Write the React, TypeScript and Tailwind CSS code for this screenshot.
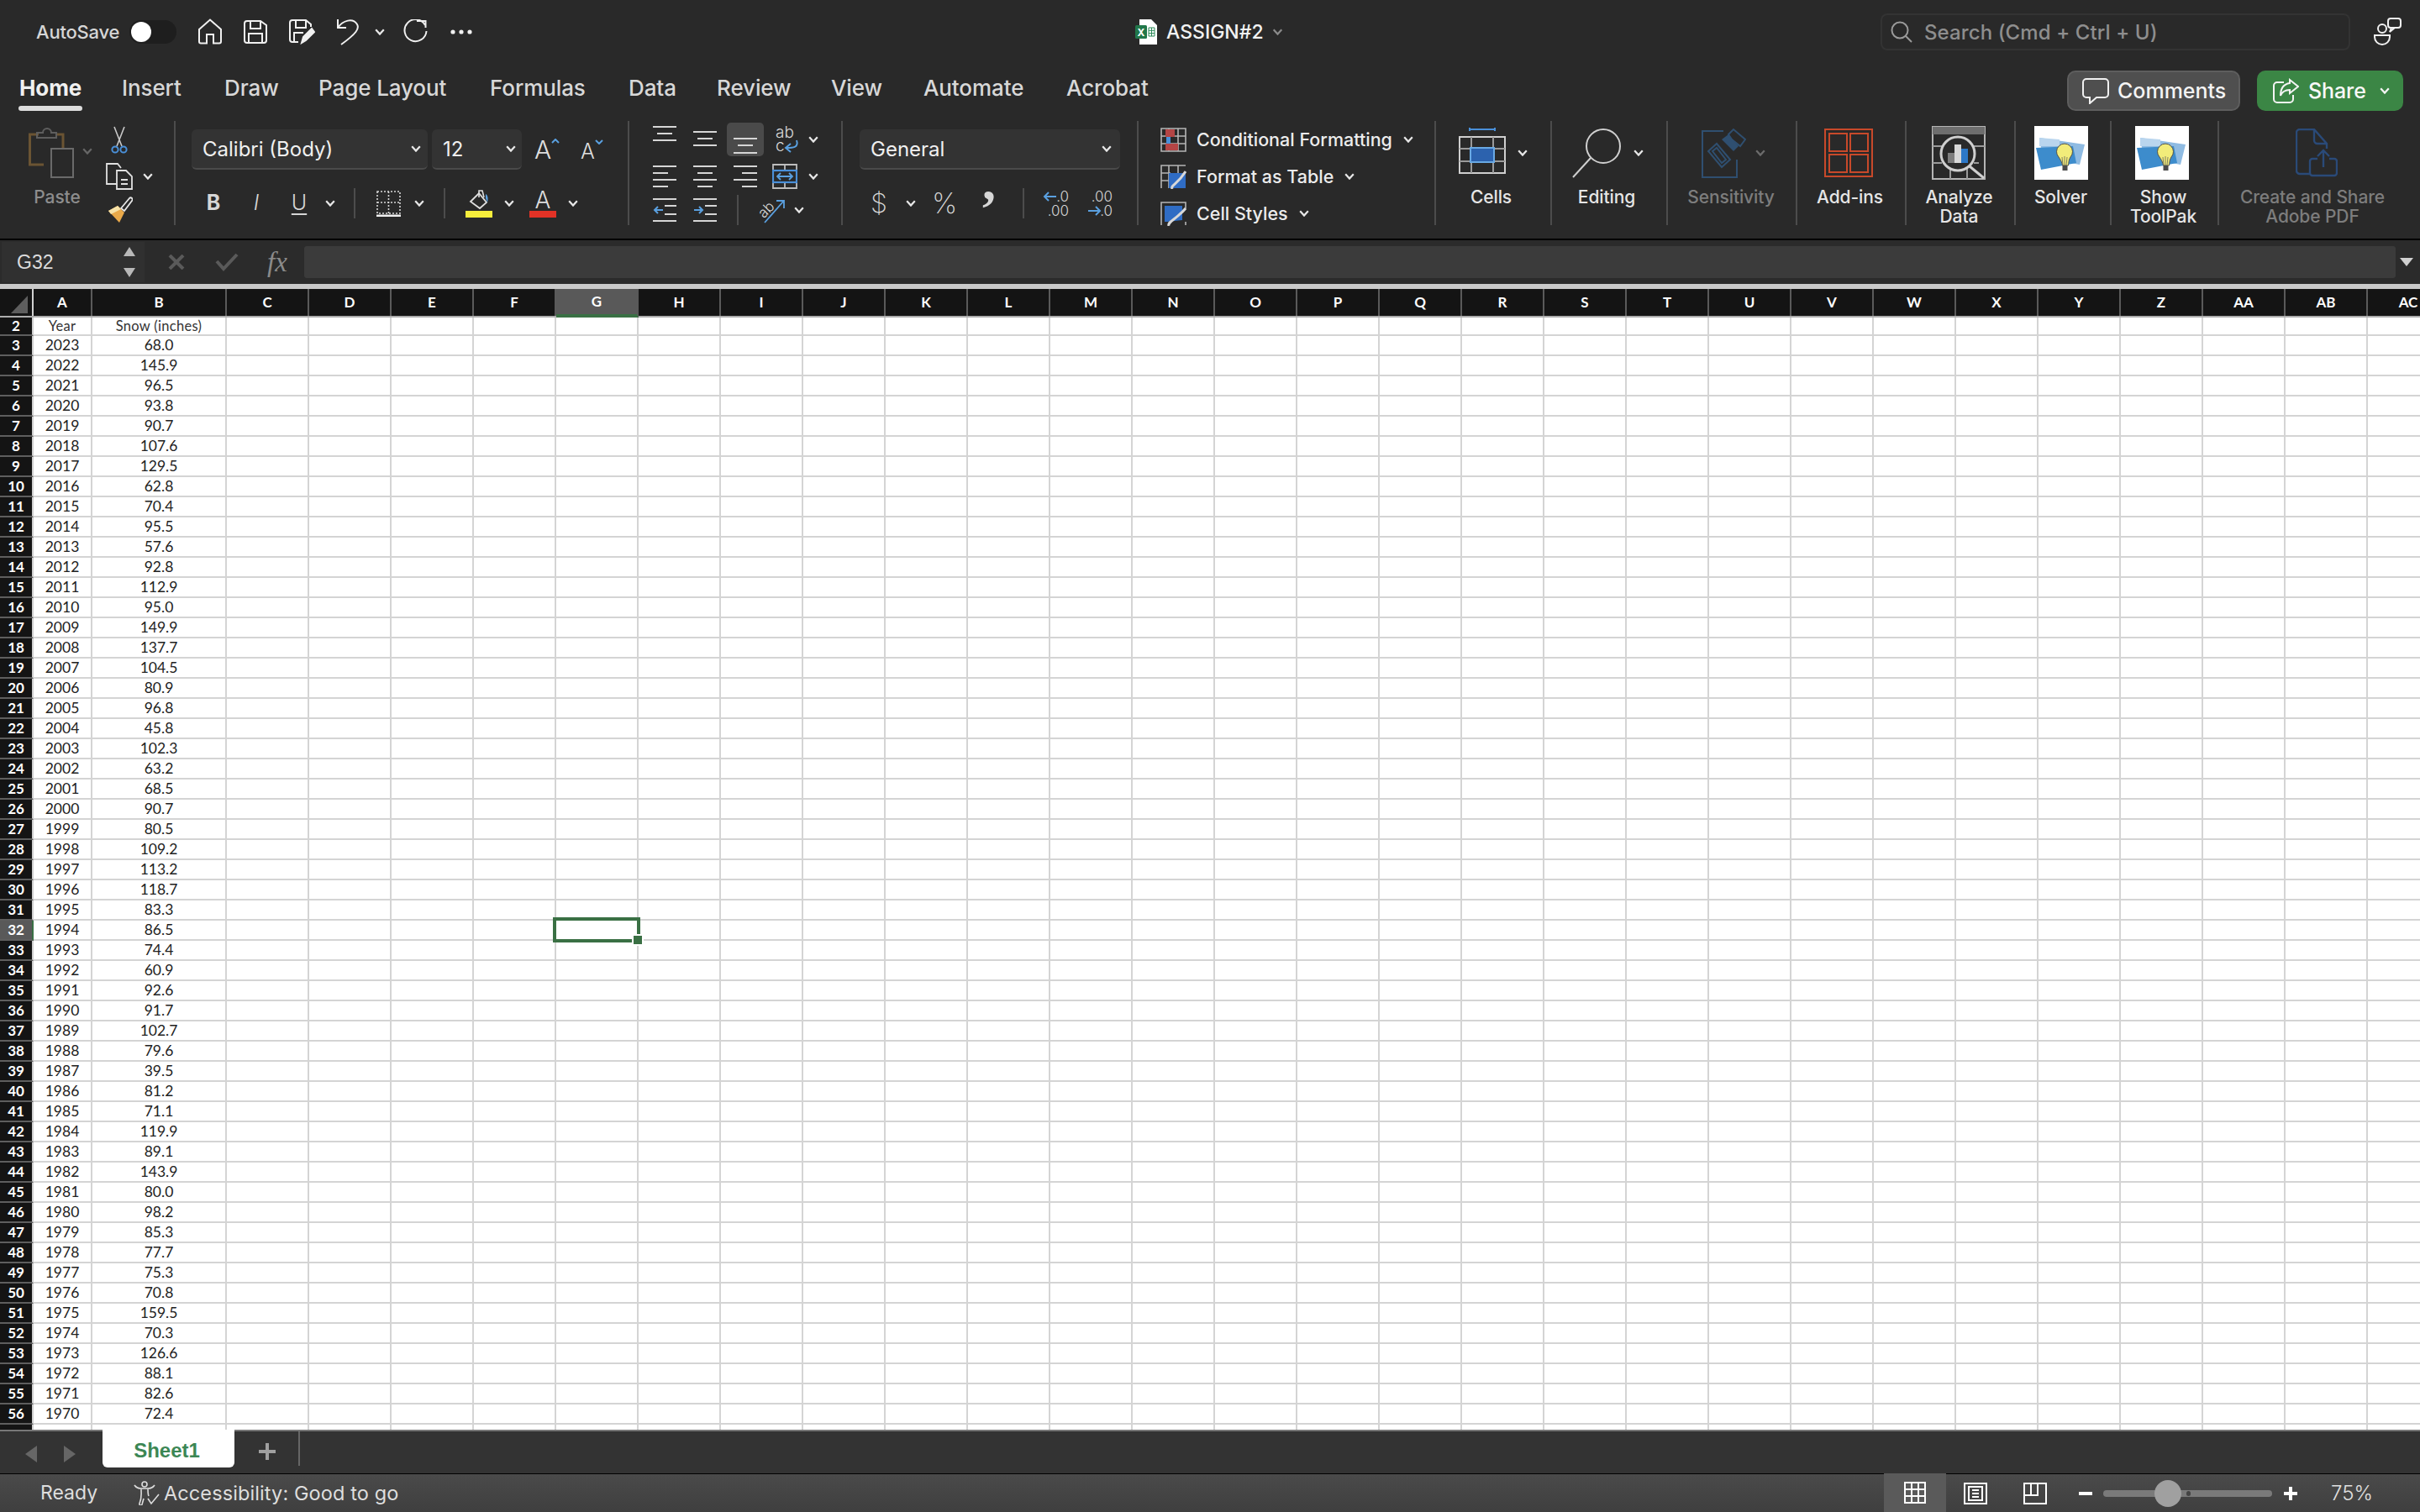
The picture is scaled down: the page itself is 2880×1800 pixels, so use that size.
import React from 'react';

const TABS: [string, string][] = [
    ['Home', 'w-[122px]'],
    ['Insert', 'w-[122px]'],
    ['Draw', 'w-[112px]'],
    ['Page Layout', 'w-[204px]'],
    ['Formulas', 'w-[165px]'],
    ['Data', 'w-[105px]'],
    ['Review', 'w-[136px]'],
    ['View', 'w-[110px]'],
    ['Automate', 'w-[170px]'],
    ['Acrobat', 'w-[100px]'],
];

const COLS = 'CDEFGHIJKLMNOPQRSTUVWXYZ'.split('').concat(['AA', 'AB', 'AC']);

const SNOW = [
    '68.0', '145.9', '96.5', '93.8', '90.7', '107.6', '129.5', '62.8', '70.4', '95.5', '57.6', '92.8', '112.9', '95.0',
    '149.9', '137.7', '104.5', '80.9', '96.8', '45.8', '102.3', '63.2', '68.5', '90.7', '80.5', '109.2', '113.2', '118.7',
    '83.3', '86.5', '74.4', '60.9', '92.6', '91.7', '102.7', '79.6', '39.5', '81.2', '71.1', '119.9', '89.1', '143.9',
    '80.0', '98.2', '85.3', '77.7', '75.3', '70.8', '159.5', '70.3', '126.6', '88.1', '82.6', '72.4',
];

const Chev = ({ className = '', color = '#e8e8e8' }: { className?: string; color?: string }) => (
    <svg width="12" height="8" viewBox="0 0 12 8" fill="none" className={`shrink-0 ${className}`}>
        <path d="M1.2 1.2 L6 6.6 L10.8 1.2" stroke={color} strokeWidth="2.2" />
    </svg>
);

const Sep = ({ className = '' }: { className?: string }) => <div className={`w-[2px] h-[36px] bg-[#4c4c4c] shrink-0 ${className}`} />;

// three stacked text lines, y positions change per alignment
const Lines = ({ ys, xs }: { ys: number[]; xs: [number, number][] }) => (
    <svg width="28" height="40" viewBox="0 0 28 40" className="shrink-0">
        {ys.map((y, i) => (
            <rect key={i} x={xs[i][0]} y={y} width={xs[i][1]} height="2" fill="#d6d6d6" />
        ))}
    </svg>
);

const BulbIcon = () => (
    <svg width="64" height="64" viewBox="0 0 64 64" className="shrink-0">
        <rect width="64" height="64" fill="#ffffff" />
        <path d="M6 14 L60 22 L54 46 L10 38 Z" fill="#8fbbe2" />
        <path d="M2 26 L46 24 L50 44 L8 52 Z" fill="#3d8ccc" />
        <path d="M6 14 L30 16 L30 24 L6 24 Z" fill="#b9d5ee" />
        <g transform="translate(-3 9)">
            <path d="M32 28 a9.5 9.5 0 1 1 14 0 c-2 3 -2 6 -2.5 10 h-7 c-0.5 -4 -2.5 -7 -4.5 -10 Z" fill="#f2ec7a" stroke="#55544a" strokeWidth="1" />
            <path d="M37 38 L36 28 M39 38 V27 M41 38 L42 28" stroke="#66655a" strokeWidth="0.8" />
            <rect x="36.5" y="38" width="6" height="6" fill="#4a4a4a" />
        </g>
    </svg>
);

const Group = ({ className = '', last = false, children }: { className?: string; last?: boolean; children: React.ReactNode }) => (
    <div className={`h-[124px] shrink-0 ${last ? '' : 'border-r-2 border-[#4c4c4c]'} ${className}`}>{children}</div>
);

const Label = ({ className = '', children }: { className?: string; children: React.ReactNode }) => (
    <div className={`mt-[4px] text-center text-[21px] leading-[23px] font-medium tracking-[-0.1px] text-[#e6e6e6] ${className}`}>{children}</div>
);

const TopBar = () => (
    <div className="h-[75px] flex items-center shrink-0">
        <span className="ml-[43px] w-[99px] pt-[2px] text-[22px] font-medium tracking-[-0.2px] text-[#d6d6d6] whitespace-nowrap">AutoSave</span>
        <div className="ml-[12px] w-[56px] h-[28px] rounded-full bg-[#1e1e1e] flex items-center pl-[2px]">
            <div className="w-[24px] h-[24px] rounded-full bg-white" />
        </div>
        {/* home */}
        <svg width="30" height="31" viewBox="0 0 30 31" fill="none" stroke="#f0f0f0" strokeWidth="2" className="ml-[25px]">
            <path d="M2 13 L15 1.5 L28 13 V27.5 a2 2 0 0 1 -2 2 H19 V19 H11 V29.5 H4 a2 2 0 0 1 -2 -2 Z" />
        </svg>
        {/* save */}
        <svg width="28" height="28" viewBox="0 0 28 28" fill="none" stroke="#f0f0f0" strokeWidth="2" className="ml-[25px]">
            <path d="M4 1 H20 L27 6 V24 a3 3 0 0 1 -3 3 H4 a3 3 0 0 1 -3 -3 V4 a3 3 0 0 1 3 -3 Z" />
            <path d="M8 1 V10 H20 V1 M6 27 V16 H22 V27" />
        </svg>
        {/* save as */}
        <svg width="31" height="30" viewBox="0 0 31 30" fill="none" stroke="#f0f0f0" strokeWidth="2" className="ml-[26px]">
            <path d="M26 9 V6 L20 1 H4 a3 3 0 0 0 -3 3 V24 a3 3 0 0 0 3 3 H11" />
            <path d="M8 1 V10 H20 V1 M6 27 V16 H17" />
            <path d="M15 28 L17 21 L27 11 L30 15 L20 25 Z" fill="#f0f0f0" />
        </svg>
        {/* undo */}
        <svg width="28" height="32" viewBox="0 0 28 32" fill="none" stroke="#f0f0f0" strokeWidth="2" className="ml-[25px]">
            <path d="M2 1 V11 H12" />
            <path d="M2 11 C8 2 20 -1 25 7 C28 12 24 18 6 31" />
        </svg>
        <Chev className="ml-[18px]" />
        {/* redo */}
        <svg width="30" height="30" viewBox="0 0 30 30" fill="none" stroke="#f0f0f0" strokeWidth="2" className="ml-[21px]">
            <path d="M27 7 A13 13 0 1 0 28.5 14" />
            <path d="M17 2 H27.5 V10" />
        </svg>
        <svg width="26" height="6" viewBox="0 0 26 6" fill="#f0f0f0" className="ml-[27px]">
            <circle cx="3" cy="3" r="2.6" />
            <circle cx="13" cy="3" r="2.6" />
            <circle cx="23" cy="3" r="2.6" />
        </svg>
        {/* excel file */}
        <svg width="26" height="30" viewBox="0 0 26 30" className="ml-[789px] overflow-visible">
            <path d="M5 0 H19 L26 7 V30 H5 Z" fill="#ffffff" />
            <rect x="0" y="7" width="14" height="16" rx="1.5" fill="#21774a" />
            <text x="7" y="19.5" textAnchor="middle" fontSize="12" fontWeight="700" fill="#ffffff" fontFamily="Inter, sans-serif">X</text>
            <path d="M16 10 H23 V20 H16 Z M16 13.3 H23 M16 16.6 H23 M19.5 10 V20" stroke="#2c8a59" strokeWidth="1" fill="none" />
        </svg>
        <span className="ml-[11px] w-[118px] pt-[2px] text-[23px] font-medium text-[#f2f2f2] whitespace-nowrap">ASSIGN#2</span>
        <Chev className="ml-[6px] !w-[17px]" color="#8a8a8a" />
        {/* search */}
        <div className="ml-[709px] w-[559px] h-[44px] rounded-[8px] border-2 border-[#333333] flex items-center pl-[10px]">
            <svg width="26" height="26" viewBox="0 0 26 26" fill="none" stroke="#9a9a9a" strokeWidth="2">
                <circle cx="11" cy="11" r="9.5" />
                <path d="M18 18 L25 25" />
            </svg>
            <span className="ml-[14px] pt-[2px] text-[24px] font-medium tracking-[0.1px] text-[#8e8e8e] whitespace-nowrap">Search (Cmd + Ctrl + U)</span>
        </div>
        {/* people */}
        <svg width="33" height="33" viewBox="0 0 33 33" fill="none" stroke="#f0f0f0" strokeWidth="2" className="ml-[28px]">
            <rect x="17" y="1" width="15" height="11" rx="3" />
            <path d="M21 12 L19 17 L25 12" />
            <circle cx="10" cy="13" r="5" />
            <path d="M1 21 H19 V23 a9 9 0 0 1 -18 0 Z" />
        </svg>
    </div>
);

const TabRow = () => (
    <div className="h-[69px] shrink-0 flex items-start pl-[23px]">
        {TABS.map(([t, w], i) => (
            <div key={t} className={`${w} pt-[15px]`}>
                <div className={`inline-block text-[26px] leading-[30px] tracking-[-0.1px] whitespace-nowrap ${i === 0 ? 'font-bold text-[#f0f0f0]' : 'font-medium text-[#d8d8d8]'}`}>{t}</div>
                {i === 0 && <div className="mt-[6px] h-[6px] -ml-[1px] w-[76px] rounded-full bg-[#dcdcdc]" />}
            </div>
        ))}
        <div className="ml-auto flex mt-[9px] pr-[20px]">
            <div className="w-[206px] h-[48px] rounded-[10px] bg-[#4f4f4f] border-2 border-[#5e5e5e] flex items-center pl-[16px]">
                <svg width="32" height="31" viewBox="0 0 32 31" fill="none" stroke="#f0f0f0" strokeWidth="2">
                    <path d="M5 1 H27 a4 4 0 0 1 4 4 V19 a4 4 0 0 1 -4 4 H17 L9 30 V23 H5 a4 4 0 0 1 -4 -4 V5 a4 4 0 0 1 4 -4 Z" />
                </svg>
                <span className="ml-[10px] pt-[2px] text-[25px] font-medium text-[#f4f4f4]">Comments</span>
            </div>
            <div className="ml-[20px] w-[174px] h-[48px] rounded-[10px] bg-[#3b8645] flex items-center pl-[19px]">
                <svg width="31" height="30" viewBox="0 0 31 30" fill="none" stroke="#f4f4f4" strokeWidth="2">
                    <path d="M13 5 H5 a4 4 0 0 0 -4 4 V25 a4 4 0 0 0 4 4 H20 a4 4 0 0 0 4 -4 V20" />
                    <path d="M20 2 L30 10 L20 18 V14 C14 14 11 16 9 21 C9 12 13 7 20 6 Z" />
                </svg>
                <span className="ml-[11px] pt-[2px] text-[25px] font-medium tracking-[-0.1px] text-[#f8f8f8]">Share</span>
                <Chev className="ml-[14px] !w-[16px]" color="#f4f4f4" />
            </div>
        </div>
    </div>
);

const ClipboardGroup = () => (
    <Group className="w-[209px] flex">
        <div className="w-[126px] shrink-0">
            <div className="flex h-[76px] items-center pl-[34px]">
                <svg width="54" height="60" viewBox="0 0 54 60" fill="none">
                    <path d="M18 44 H1.5 V8 H12 M32 8 H41 V24" stroke="#6b5433" strokeWidth="3" />
                    <path d="M10 10 V6 H17 a5 5 0 0 1 10 0 H33 V12 H10 Z" stroke="#5e5e5e" strokeWidth="2" />
                    <rect x="27" y="25" width="26" height="34" stroke="#6a6a6a" strokeWidth="2" />
                </svg>
                <Chev className="ml-[10px] -mt-[4px]" color="#666666" />
            </div>
            <Label className="!text-[#8d8d8d] pl-[10px] !mt-[3px] w-[126px]">Paste</Label>
        </div>
        <div className="flex flex-col">
            <div className="h-[44px] shrink-0 flex items-center pl-[6px]">
                <svg width="20" height="33" viewBox="0 0 20 33" fill="none">
                    <path d="M4 1 L13 24 M16 1 L7 24" stroke="#c9c9c9" strokeWidth="1.6" />
                    <circle cx="5" cy="28" r="3.6" stroke="#4a90d9" strokeWidth="2" />
                    <circle cx="15" cy="28" r="3.6" stroke="#4a90d9" strokeWidth="2" />
                </svg>
            </div>
            <div className="h-[44px] shrink-0 flex items-center">
                <svg width="32" height="32" viewBox="0 0 32 32" fill="none" stroke="#e0e0e0" strokeWidth="1.8">
                    <path d="M13 25 H1 V1 H14 L18 6" />
                    <path d="M13 9 H24 L31 16 V31 H13 Z" />
                    <path d="M18 20 H26 M18 25 H26" />
                </svg>
                <Chev className="ml-[12px]" />
            </div>
            <div className="h-[36px] shrink-0 flex items-center">
                <svg width="32" height="32" viewBox="0 0 32 32" fill="none">
                    <path d="M18 14 L28 2 a2 2 0 0 1 3 3 L22 17 Z" stroke="#e8e8e8" strokeWidth="1.8" />
                    <path d="M3 17 L14 11 L22 19 L16 31 Z" fill="#e9a94a" />
                    <path d="M3 17 L14 11 L18 15 L6 21 Z" fill="#f7e2a8" />
                </svg>
            </div>
        </div>
    </Group>
);

const FontGroup = () => (
    <Group className="w-[540px] ml-0 pl-[19px]">
        <div className="flex items-center mt-[10px] h-[48px]">
            <div className="w-[281px] h-[48px] rounded-[6px] bg-[#333333] border-b-2 border-[#4a4a4a] flex items-center justify-between pl-[13px] pr-[8px]">
                <span className="text-[24px] pt-[1px] text-[#f0f0f0]">Calibri (Body)</span>
                <Chev />
            </div>
            <div className="ml-[5px] w-[107px] h-[48px] rounded-[6px] bg-[#333333] border-b-2 border-[#4a4a4a] flex items-center justify-between pl-[13px] pr-[7px]">
                <span className="text-[24px] pt-[1px] text-[#f0f0f0]">12</span>
                <Chev />
            </div>
            <div className="ml-[15px] flex items-start w-[30px]">
                <span className="text-[30px] leading-[30px] font-light text-[#dedede]">A</span>
                <svg width="10" height="6" viewBox="0 0 10 6" fill="none" className="shrink-0 mt-[2px]"><path d="M1 5 L5 1 L9 5" stroke="#5aa0e0" strokeWidth="2" /></svg>
            </div>
            <div className="ml-[25px] flex items-start w-[28px] pt-[3px]">
                <span className="text-[25px] leading-[28px] font-light text-[#dedede]">A</span>
                <svg width="10" height="6" viewBox="0 0 10 6" fill="none" className="shrink-0"><path d="M1 1 L5 5 L9 1" stroke="#5aa0e0" strokeWidth="2" /></svg>
            </div>
        </div>
        <div className="flex items-center mt-[20px] h-[40px]">
            <span className="ml-[11px] w-[30px] text-center text-[25px] font-bold text-[#d6d6d6]">B</span>
            <span className="ml-[21px] w-[30px] text-center text-[25px] italic font-light text-[#d6d6d6]">I</span>
            <span className="ml-[21px] w-[30px] text-center text-[25px] font-light underline underline-offset-4 decoration-2 text-[#d6d6d6]">U</span>
            <Chev className="ml-[16px]" />
            <Sep className="ml-[22px]" />
            <svg width="29" height="31" viewBox="0 0 29 31" fill="none" className="ml-[25px]">
                <rect x="1" y="1" width="27" height="26" stroke="#d8d8d8" strokeWidth="1.6" strokeDasharray="2 2" />
                <path d="M14.5 1 V27 M1 14 H28" stroke="#d8d8d8" strokeWidth="1.6" strokeDasharray="2 2" />
                <rect x="0" y="28.5" width="29" height="2.5" fill="#f0f0f0" />
            </svg>
            <Chev className="ml-[16px]" />
            <Sep className="ml-[23px]" />
            <svg width="32" height="33" viewBox="0 0 32 33" fill="none" className="ml-[24px]">
                <path d="M6 14 L16 4 L25 15 L17 22 Z" stroke="#e0e0e0" strokeWidth="1.8" />
                <path d="M16 9 V1 H20 L22 9" stroke="#e0e0e0" strokeWidth="1.6" />
                <path d="M24 5 C27 7 27 11 26 15 L24 10 Z" fill="#5aa0e0" />
                <rect y="25" width="32" height="8" fill="#f7ee3c" />
            </svg>
            <Chev className="ml-[14px]" />
            <div className="ml-[18px] w-[32px] h-[33px] flex flex-col items-center">
                <span className="h-[25px] text-[28px] leading-[24px] font-light text-[#dedede]">A</span>
                <div className="w-[32px] h-[8px] bg-[#e23226]" />
            </div>
            <Chev className="ml-[14px]" />
        </div>
    </Group>
);

const AlignGroup = () => (
    <Group className="w-[254px] pl-[28px] flex flex-col">
        <div className="h-[44px] shrink-0 flex items-center">
            <Lines ys={[4, 12, 20]} xs={[[0, 28], [5, 18], [0, 28]]} />
            <div className="ml-[20px]"><Lines ys={[10, 18, 26]} xs={[[0, 28], [5, 18], [0, 28]]} /></div>
            <div className="ml-[12px] w-[44px] h-[40px] rounded-[5px] bg-[#4a4a4a] flex items-center justify-center">
                <Lines ys={[18, 26, 35]} xs={[[0, 28], [5, 18], [0, 28]]} />
            </div>
            <svg width="28" height="32" viewBox="0 0 28 32" className="ml-[14px] shrink-0 overflow-visible">
                <text fontSize="19" fontWeight="300" fill="#d8d8d8" fontFamily="Inter, sans-serif">
                    <tspan x="0" y="14">ab</tspan>
                    <tspan x="0" y="30">c</tspan>
                </text>
                <path d="M25 17 C28 26 20 26 13 26 M18 21 L12 26 L18 31" stroke="#5aa0e0" strokeWidth="2" fill="none" />
            </svg>
            <Chev className="ml-[11px]" />
        </div>
        <div className="h-[44px] shrink-0 flex items-center">
            <Lines ys={[7, 15, 23, 31]} xs={[[0, 28], [0, 18], [0, 28], [0, 18]]} />
            <div className="ml-[20px]"><Lines ys={[7, 15, 23, 31]} xs={[[0, 28], [5, 18], [0, 28], [5, 18]]} /></div>
            <div className="ml-[20px]"><Lines ys={[7, 15, 23, 31]} xs={[[0, 28], [10, 18], [0, 28], [10, 18]]} /></div>
            <svg width="30" height="30" viewBox="0 0 30 30" fill="none" className="ml-[18px] shrink-0">
                <path d="M1 1 H29 V29 H1 Z M15 1 V8 M15 22 V29" stroke="#bdbdbd" strokeWidth="1.8" />
                <rect x="1" y="8" width="28" height="14" stroke="#4a90d9" strokeWidth="2.2" />
                <path d="M6 15 H24 M10 11 L6 15 L10 19 M20 11 L24 15 L20 19" stroke="#5aa0e0" strokeWidth="1.8" />
            </svg>
            <Chev className="ml-[13px]" />
        </div>
        <div className="h-[36px] shrink-0 flex items-center">
            <svg width="28" height="28" viewBox="0 0 28 28" fill="none" className="shrink-0">
                <path d="M0 1 H28 M14 9 H28 M14 19 H28 M0 27 H28" stroke="#d6d6d6" strokeWidth="2" />
                <path d="M12 14 H2 M6 10 L2 14 L6 18" stroke="#5aa0e0" strokeWidth="2" />
            </svg>
            <svg width="28" height="28" viewBox="0 0 28 28" fill="none" className="ml-[20px] shrink-0">
                <path d="M0 1 H28 M14 9 H28 M14 19 H28 M0 27 H28" stroke="#d6d6d6" strokeWidth="2" />
                <path d="M1 14 H11 M7 10 L11 14 L7 18" stroke="#5aa0e0" strokeWidth="2" />
            </svg>
            <Sep className="ml-[24px]" />
            <svg width="34" height="32" viewBox="0 0 34 32" fill="none" className="ml-[21px] shrink-0 overflow-visible">
                <text x="2" y="22" fontSize="17" fontWeight="300" fill="#d8d8d8" fontFamily="Inter, sans-serif" transform="rotate(-45 11 16)">ab</text>
                <path d="M10 31 L32 6 M24 5 H33 V14" stroke="#5aa0e0" strokeWidth="1.8" />
            </svg>
            <Chev className="ml-[11px]" />
        </div>
    </Group>
);

const DecimalIcon = ({ up }: { up: boolean }) => (
    <svg width="30" height="32" viewBox="0 0 30 32" className="shrink-0 overflow-visible">
        <text textAnchor="end" fontSize="17" fontWeight="300" fill="#d6d6d6" fontFamily="Inter, sans-serif">
            <tspan x="30" y="14">{up ? '.0' : '.00'}</tspan>
            <tspan x="30" y="31">{up ? '.00' : '.0'}</tspan>
        </text>
        {up ? (
            <path d="M15 8 H1 M6 3 L1 8 L6 13" stroke="#5aa0e0" strokeWidth="2" fill="none" />
        ) : (
            <path d="M1 25 H15 M10 20 L15 25 L10 30" stroke="#5aa0e0" strokeWidth="2" fill="none" />
        )}
    </svg>
);

const NumberGroup = () => (
    <Group className="w-[352px] pl-[20px]">
        <div className="mt-[10px] w-[310px] h-[48px] rounded-[6px] bg-[#333333] border-b-2 border-[#4a4a4a] flex items-center justify-between pl-[13px] pr-[10px]">
            <span className="text-[24px] pt-[1px] text-[#f0f0f0]">General</span>
            <Chev />
        </div>
        <div className="flex items-center mt-[20px] h-[40px]">
            <span className="ml-[13px] w-[20px] h-[40px] text-center text-[32px] leading-[40px] font-extralight text-[#d6d6d6]">$</span>
            <Chev className="ml-[22px]" />
            <span className="ml-[19px] w-[30px] text-center text-[34px] font-extralight leading-none text-[#d6d6d6]">%</span>
            <span className="ml-[27px] w-[22px] h-[24px] text-center text-[64px] font-bold leading-[0px] -translate-y-[14px] font-['Liberation_Serif',serif] text-[#d6d6d6]">,</span>
            <Sep className="ml-[29px]" />
            <div className="ml-[23px]"><DecimalIcon up /></div>
            <div className="ml-[22px]"><DecimalIcon up={false} /></div>
        </div>
    </Group>
);

const StyleRow = ({ icon, label, gap }: { icon: React.ReactNode; label: string; gap: string }) => (
    <div className="h-[44px] shrink-0 flex items-center">
        {icon}
        <span className="ml-[12px] text-[21.5px] font-medium text-[#ececec] whitespace-nowrap">{label}</span>
        <Chev className={gap} />
    </div>
);

const StylesGroup = () => (
    <Group className="w-[354px] pl-[26px] flex flex-col">
        <StyleRow
            gap="ml-[13px]"
            label="Conditional Formatting"
            icon={
                <svg width="31" height="29" viewBox="0 0 31 29" fill="none" className="shrink-0">
                    <path d="M1 1 H30 V28 H1 Z M1 10 H30 M1 19 H30 M10 1 V28 M21 1 V28" stroke="#b5b5b5" strokeWidth="1.6" />
                    <rect x="6" y="2" width="11" height="9" fill="#b44545" />
                    <rect x="7" y="11" width="5" height="8" fill="#4a90d9" />
                    <rect x="6" y="19" width="15" height="8" fill="#b44545" />
                </svg>
            }
        />
        <StyleRow
            gap="ml-[13px]"
            label="Format as Table"
            icon={
                <svg width="31" height="29" viewBox="0 0 31 29" fill="none" className="shrink-0">
                    <path d="M1 28 V1 H30 M1 10 H12 M1 19 H10 M10 1 V28 M21 1 V10" stroke="#b5b5b5" strokeWidth="1.6" />
                    <path d="M10 10 H30 V28 H10 Z" fill="#2f6cc4" />
                    <path d="M14 29 C12 24 20 24 30 8" stroke="#d8d8d8" strokeWidth="3" />
                </svg>
            }
        />
        <div className="h-[36px] shrink-0">
            <StyleRow
                gap="ml-[13px]"
                label="Cell Styles"
                icon={
                    <svg width="31" height="29" viewBox="0 0 31 29" fill="none" className="shrink-0">
                        <path d="M1 28 V1 H30 V8 M30 24 V28" stroke="#b5b5b5" strokeWidth="1.6" />
                        <path d="M5 5 H26 V22 L8 24 H5 Z" fill="#2f6cc4" />
                        <path d="M10 29 C8 24 18 22 30 8" stroke="#d8d8d8" strokeWidth="3" />
                    </svg>
                }
            />
        </div>
    </Group>
);

const LargeGroups = () => (
    <>
        <Group className="w-[138px]">
            <div className="flex items-center h-[76px] pl-[27px]">
                <svg width="56" height="64" viewBox="0 0 56 64" fill="none" className="shrink-0">
                    <path d="M13 2 V6 M13 4 H43 M43 2 V6" stroke="#4a90d9" strokeWidth="2" />
                    <rect x="1" y="13" width="54" height="43" stroke="#cfcfcf" strokeWidth="2" />
                    <path d="M15 13 V56 M41 13 V56 M1 27 H55 M1 42 H55" stroke="#9a9a9a" strokeWidth="2" />
                    <rect x="14" y="26" width="28" height="17" fill="#2c62ae" stroke="#69a9e4" strokeWidth="2" />
                </svg>
                <Chev className="ml-[14px]" />
            </div>
            <Label className="pr-[5px] !mt-[3px]">Cells</Label>
        </Group>
        <Group className="w-[138px]">
            <div className="flex items-center h-[76px] pl-[24px]">
                <svg width="58" height="60" viewBox="0 0 58 60" fill="none" className="shrink-0">
                    <ellipse cx="37" cy="22" rx="20" ry="20" stroke="#cfcfcf" strokeWidth="2" />
                    <path d="M22 36 L1 59" stroke="#cfcfcf" strokeWidth="2" />
                </svg>
                <Chev className="ml-[15px]" />
            </div>
            <Label className="pr-[6px] !mt-[3px]">Editing</Label>
        </Group>
        <Group className="w-[154px]">
            <div className="flex items-center h-[76px] pl-[40px]">
                <svg width="53" height="60" viewBox="0 0 53 60" fill="none" className="shrink-0">
                    <path d="M26 4 H1 V59 H42 V38" stroke="#2f4f70" strokeWidth="2" />
                    <path d="M32 8 L38 2 L52 14 L46 22 L36 14 Z" stroke="#2f4f70" strokeWidth="2" />
                    <path d="M24 14 L32 8 L44 22 L38 28 Z" fill="#2f4f70" />
                    <path d="M8 28 L18 19 L34 38 L24 47 Z M13 28 L18 24 L29 38 L24 42 Z" stroke="#2f4f70" strokeWidth="2" />
                </svg>
                <Chev className="ml-[11px]" color="#6c6c6c" />
            </div>
            <Label className="!text-[#7d7d7d] pr-[2px] !mt-[3px]">Sensitivity</Label>
        </Group>
        <Group className="w-[130px]">
            <div className="flex items-center h-[76px] pl-[32px]">
                <svg width="58" height="58" viewBox="0 0 58 58" fill="none" className="shrink-0">
                    <rect x="1" y="1" width="56" height="56" stroke="#c8492a" strokeWidth="2" />
                    <rect x="6" y="6" width="21" height="21" stroke="#c8492a" strokeWidth="2" />
                    <rect x="31" y="6" width="21" height="21" stroke="#c8492a" strokeWidth="2" />
                    <rect x="6" y="31" width="21" height="21" stroke="#c8492a" strokeWidth="2" />
                    <rect x="31" y="31" width="21" height="21" stroke="#c8492a" strokeWidth="2" />
                </svg>
            </div>
            <Label className="pr-[3px] !mt-[3px]">Add-ins</Label>
        </Group>
        <Group className="w-[130px]">
            <div className="flex items-center h-[76px] pl-[30px]">
                <svg width="64" height="64" viewBox="0 0 64 64" fill="none" className="shrink-0">
                    <rect x="1" y="1" width="62" height="62" stroke="#b5b5b5" strokeWidth="2" />
                    <rect x="1" y="1" width="62" height="9" fill="#6e6e6e" />
                    <path d="M1 24 H12 M1 44 H12 M50 24 H63 M50 44 H56 M22 50 V63 M42 50 V63" stroke="#9a9a9a" strokeWidth="2" />
                    <circle cx="31" cy="33" r="20" fill="#2a2a2a" stroke="#cfcfcf" strokeWidth="3" />
                    <rect x="19" y="32" width="8" height="12" fill="#7e7e7e" />
                    <rect x="27" y="22" width="8" height="22" fill="#d8d8d8" />
                    <rect x="35" y="27" width="8" height="17" fill="#2c78c8" />
                    <path d="M45 48 L62 62" stroke="#cfcfcf" strokeWidth="3" />
                </svg>
            </div>
            <Label className="pr-[3px] !mt-[3px]">Analyze<br />Data</Label>
        </Group>
        <Group className="w-[114px]">
            <div className="flex items-center h-[76px] pl-[22px]"><BulbIcon /></div>
            <Label className="pr-[5px] !mt-[3px]">Solver</Label>
        </Group>
        <Group className="w-[128px]">
            <div className="flex items-center h-[76px] pl-[28px]"><BulbIcon /></div>
            <Label className="pr-[3px] !mt-[3px]">Show<br />ToolPak</Label>
        </Group>
        <Group last className="w-[222px]">
            <div className="flex items-center h-[76px] pl-[91px]">
                <svg width="50" height="58" viewBox="0 0 50 58" fill="none" className="shrink-0">
                    <path d="M18 54 H5 a4 4 0 0 1 -4 -4 V5 a4 4 0 0 1 4 -4 H22 L37 18 V24 M22 1 V14 a4 4 0 0 0 4 4 H37" stroke="#2a4a78" strokeWidth="2.4" />
                    <path d="M26 36 H20 a3 3 0 0 0 -3 3 V53 a3 3 0 0 0 3 3 H46 a3 3 0 0 0 3 -3 V39 a3 3 0 0 0 -3 -3 H40" stroke="#2a4a78" strokeWidth="2.4" />
                    <path d="M33 46 V26 M26 33 L33 26 L40 33" stroke="#2a4a78" strokeWidth="2.4" />
                </svg>
            </div>
            <Label className="!text-[#7d7d7d] !mt-[3px]">Create and Share<br />Adobe PDF</Label>
        </Group>
    </>
);

const FormulaBar = () => (
    <div className="h-[52px] shrink-0 bg-[#2b2b2b] flex items-center">
        <div className="w-[170px] h-[48px] ml-[2px] bg-[#303030] flex items-center pl-[18px] relative">
            <span className="text-[23px] font-['Liberation_Sans',sans-serif] text-[#dcdcdc]">G32</span>
            <svg width="14" height="36" viewBox="0 0 14 36" fill="#b8b8b8" className="ml-auto mr-[11px]">
                <path d="M7 0 L14 11 H0 Z M0 25 H14 L7 36 H7 Z" />
            </svg>
        </div>
        <svg width="20" height="18" viewBox="0 0 20 18" fill="none" className="ml-[28px]">
            <path d="M2 1 L18 17 M18 1 L2 17" stroke="#5a5a5a" strokeWidth="4" />
        </svg>
        <svg width="28" height="22" viewBox="0 0 28 22" fill="none" className="ml-[36px]">
            <path d="M2 10 L10 19 L26 2" stroke="#5a5a5a" strokeWidth="4" />
        </svg>
        <span className="ml-[34px] w-[30px] font-['Liberation_Serif',serif] italic text-[33px] leading-none text-[#8a8a8a] whitespace-nowrap">fx</span>
        <div className="ml-[14px] w-[2489px] h-[38px] rounded-[3px] bg-[#3b3b3b]" />
        <svg width="16" height="10" viewBox="0 0 16 10" fill="#d0d0d0" className="ml-[5px]">
            <path d="M0 0 H16 L8 10 Z" />
        </svg>
    </div>
);

const Sheet = () => (
    <div className="flex-1 min-h-0 overflow-hidden bg-white font-['Lato',sans-serif] border-t-[6px] border-[#c9c9c9]">
        {/* column header row */}
        <div className="flex h-[34px] bg-[#141414] border-b-2 border-[#adadad]">
            <div className="w-[40px] shrink-0 border-r-2 border-[#d0d0d0] flex items-end justify-end pr-[5px] pb-[3px]">
                <svg width="20" height="21" viewBox="0 0 20 21" fill="#5e5e5e"><path d="M20 0 V21 H0 Z" /></svg>
            </div>
            <div className="w-[70px] shrink-0 border-r-2 border-[#5a5a5a] flex items-center justify-center text-[17px] font-bold text-white">A</div>
            <div className="w-[160px] shrink-0 border-r-2 border-[#5a5a5a] flex items-center justify-center text-[17px] font-bold text-white">B</div>
            {COLS.map(c => (
                <div
                    key={c}
                    className={`w-[98px] shrink-0 flex items-center justify-center text-[17px] font-bold text-white border-r-2 ${c === 'G' ? 'bg-[#595959] border-b-4 border-b-[#3a7044] border-r-[#595959] -mb-[2px]' : 'border-[#5a5a5a]'}`}
                >
                    {c}
                </div>
            ))}
        </div>
        {/* rows 2..57, row 2 is the title row and slightly shorter */}
        {Array.from({ length: 56 }, (_, i) => i + 2).map(n => {
            const year = n === 2 ? 'Year' : n <= 56 ? String(2026 - n) : '';
            const snow = n === 2 ? 'Snow (inches)' : n <= 56 ? SNOW[n - 3] : '';
            const body = n === 2 ? 'text-[#333333] text-[16.5px] tracking-[0.3px]' : 'text-[#222222] text-[17.5px] pt-[1px]';
            return (
                <div key={n} className={`flex ${n === 2 ? 'h-[22px]' : 'h-[24px]'}`}>
                    <div className={`w-[40px] shrink-0 flex items-center justify-center text-[17px] font-bold text-white border-b-2 border-[#5e5e5e] border-r-2 ${n === 32 ? 'bg-[#595959] border-r-[#3a7044]' : 'bg-[#141414] border-r-[#d0d0d0]'}`}>
                        {n <= 56 ? n : ''}
                    </div>
                    <div className={`w-[70px] shrink-0 flex items-center justify-center border-r-2 border-b-2 border-[#d4d4d4] ${body}`}>{year}</div>
                    <div className={`w-[160px] shrink-0 flex items-center justify-center border-r-2 border-b-2 border-[#d4d4d4] ${body}`}>{snow}</div>
                    {COLS.map(c => (
                        <div key={c} className="relative w-[98px] shrink-0 border-r-2 border-b-2 border-[#d4d4d4]">
                            {c === 'G' && n === 32 && (
                                <>
                                    <div className="absolute -left-[4px] -right-[4px] -top-[4px] -bottom-[4px] border-4 border-[#3a7044] z-10" />
                                    <div className="absolute left-[92px] top-[18px] w-[10px] h-[10px] bg-[#3a7044] ring-2 ring-white z-20" />
                                </>
                            )}
                        </div>
                    ))}
                </div>
            );
        })}
    </div>
);

const SheetTabs = () => (
    <div className="h-[53px] shrink-0 bg-[#333333] border-t-2 border-[#777777] border-b border-b-black flex items-start">
        <svg width="14" height="20" viewBox="0 0 14 20" fill="#666666" className="ml-[30px] mt-[17px]"><path d="M14 0 V20 L0 10 Z" /></svg>
        <svg width="14" height="20" viewBox="0 0 14 20" fill="#666666" className="ml-[32px] mt-[17px]"><path d="M0 0 V20 L14 10 Z" /></svg>
        <div className="ml-[32px] -mt-[2px] w-[157px] h-[45px] bg-white rounded-b-[6px] flex items-center justify-center pr-[4px] pt-[5px]">
            <span className="text-[24px] font-bold font-['Liberation_Sans',sans-serif] text-[#3c8755]">Sheet1</span>
        </div>
        <svg width="20" height="20" viewBox="0 0 20 20" fill="#a0a0a0" className="ml-[29px] mt-[14px]"><path d="M8 0 H12 V8 H20 V12 H12 V20 H8 V12 H0 V8 H8 Z" /></svg>
        <div className="ml-[27px] w-[2px] h-[41px] bg-[#666666]" />
    </div>
);

const StatusBar = () => (
    <div className="h-[45px] shrink-0 bg-gradient-to-b from-[#4a4a4a] to-[#3f3f3f] flex items-center">
        <span className="ml-[48px] w-[69px] text-[23px] text-[#dedede]">Ready</span>
        <svg width="31" height="29" viewBox="0 0 31 29" fill="none" stroke="#dedede" strokeWidth="1.6" className="ml-[42px]">
            <circle cx="13" cy="4" r="3" />
            <path d="M1 5 C4 10 9 9 13 9 C17 9 22 10 25 5 M9 10 C9 16 10 20 7 27 a1.5 1.5 0 0 0 3 1 L12 21 M17 10 C17 13 17 16 18 18" />
            <path d="M17 21 L21 27 L30 16" />
        </svg>
        <span className="ml-[5px] text-[23.5px] text-[#dedede] tracking-[0.1px] whitespace-nowrap">Accessibility: Good to go</span>
        <div className="ml-auto w-[74px] h-[46px] -mt-[1px] bg-[#5a5a5a] flex items-center justify-center">
            <svg width="26" height="26" viewBox="0 0 26 26" fill="none" stroke="#ffffff" strokeWidth="2">
                <path d="M1 1 H25 V25 H1 Z M1 9 H25 M1 17 H25 M9 1 V25 M17 1 V25" />
            </svg>
        </div>
        <svg width="28" height="26" viewBox="0 0 28 26" fill="none" stroke="#ffffff" strokeWidth="2" className="ml-[21px]">
            <path d="M1 1 H27 V25 H1 Z M6 5 H22 V21 H6 Z M10 9 H18 M10 13 H18 M10 17 H18" />
        </svg>
        <svg width="28" height="26" viewBox="0 0 28 26" fill="none" stroke="#ffffff" strokeWidth="2" className="ml-[43px]">
            <path d="M1 1 H27 V25 H1 Z M1 15 H17 V1 M9 1 V15" />
        </svg>
        <div className="ml-[38px] w-[16px] h-[4px] bg-white" />
        {/* zoom slider */}
        <div className="relative ml-[13px] w-[201px] h-[8px] rounded-full bg-[#7a7a7a]">
            <div className="absolute left-[61px] -top-[12px] w-[32px] h-[32px] rounded-full bg-[#a0a0a0]" />
            <div className="absolute left-[99px] top-[1px] w-[5px] h-[6px] rounded-full bg-[#444444]" />
        </div>
        <svg width="16" height="16" viewBox="0 0 16 16" fill="#ffffff" className="ml-[14px]"><path d="M6 0 H10 V6 H16 V10 H10 V16 H6 V10 H0 V6 H6 Z" /></svg>
        <span className="ml-[40px] mr-[50px] w-[56px] text-[24px] font-light text-[#e0e0e0]">75%</span>
    </div>
);

export default function App() {
    return (
        <div className="w-[2880px] h-[1800px] overflow-hidden flex flex-col bg-[#292929] font-['Inter',sans-serif]">
            <TopBar />
            <TabRow />
            {/* ribbon */}
            <div className="h-[140px] shrink-0">
                <div className="flex">
                    <ClipboardGroup />
                    <FontGroup />
                    <AlignGroup />
                    <NumberGroup />
                    <StylesGroup />
                    <LargeGroups />
                </div>
            </div>
            <div className="h-[2px] shrink-0 bg-black" />
            <FormulaBar />
            <Sheet />
            <SheetTabs />
            <StatusBar />
        </div>
    );
}
